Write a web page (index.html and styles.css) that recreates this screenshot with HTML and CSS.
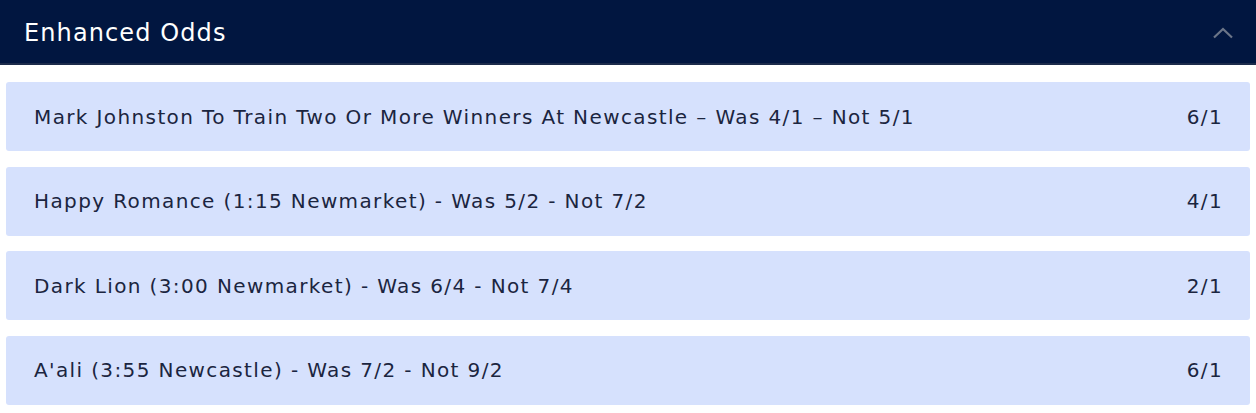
FILE: index.html
```html
<!DOCTYPE html>
<html>
<head>
<meta charset="utf-8">
<link rel="stylesheet" href="styles.css">
</head>
<body>
<div class="panel">
  <div class="header">
    <span class="title">Enhanced Odds</span>
    <svg class="chev" width="22" height="12" viewBox="0 0 22 12"><path d="M2 10.5 L11 2 L20 10.5" fill="none" stroke="#6b7588" stroke-width="2.2"/></svg>
  </div>
  <div class="list">
    <div class="row"><span class="name">Mark Johnston To Train Two Or More Winners At Newcastle – Was 4/1 – Not 5/1</span><span class="odds">6/1</span></div>
    <div class="row"><span class="name">Happy Romance (1:15 Newmarket) - Was 5/2 - Not 7/2</span><span class="odds">4/1</span></div>
    <div class="row"><span class="name">Dark Lion (3:00 Newmarket) - Was 6/4 - Not 7/4</span><span class="odds">2/1</span></div>
    <div class="row"><span class="name">A'ali (3:55 Newcastle) - Was 7/2 - Not 9/2</span><span class="odds">6/1</span></div>
  </div>
</div>
</body>
</html>
```
FILE: styles.css
```css
html, body { margin: 0; padding: 0; background: #ffffff; }
body { font-family: "DejaVu Sans", Verdana, sans-serif; }
.header {
  height: 63px;
  background: #011640;
  border-bottom: 2px solid #1c2b4b;
  display: flex;
  align-items: center;
  justify-content: space-between;
  padding: 0 22px 0 24px;
}
.title { color: #ffffff; font-size: 24px; letter-spacing: 1.1px; margin-top: 2px; }
.chev { display: block; margin-top: 2px; }
.list {
  display: flex;
  flex-direction: column;
  gap: 15.5px;
  padding: 17px 6px 0 6px;
}
.row {
  height: 69px;
  background: #d6e1fd;
  border-radius: 3px;
  display: flex;
  align-items: center;
  justify-content: space-between;
  padding: 0 27px 0 28px;
  color: #1b2540;
  font-size: 20px;
  letter-spacing: 1.38px;
}
```
